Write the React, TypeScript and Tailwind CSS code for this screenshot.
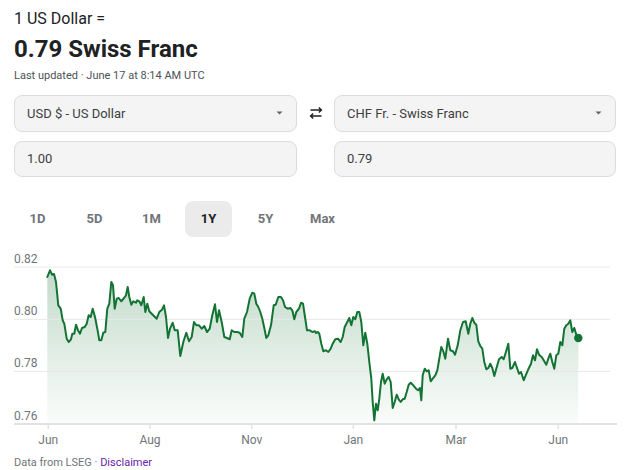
const LINE =
  "47.3,277 50,270.3 52,274.7 54,274 56,282 58.3,305.3 60.7,308.7 62.7,320.3 64.3,323.7 66.7,338.7 68.7,342 71,339.3 72.3,333.7 74.3,333.7 76,324.7 78,330.3 80,333.7 82,328 84.7,327 86.7,323.7 88.7,315.3 90.7,317 92.7,308.7 95,317 97.3,328.7 99.3,340.3 101.3,340.3 103.3,332.7 105.3,332 107.3,308.7 109.3,303.7 111.3,282 113,285.3 114.7,308.7 116.7,298.7 118.7,298 121.3,301.3 124,298 126,295.3 127.7,287 129.3,297 131.3,304.7 133.3,301.3 136,302.7 137.3,300.3 139.3,301.3 141.3,305.3 143.7,297 145.3,312 147.3,303.7 149.3,311.3 151.7,313.7 154,316 156.7,318.7 159.3,312 162,309.7 164,305.3 166,317 168,338 170,328.7 172.7,322.7 174.7,330.3 177.7,330.3 180.3,356 183.3,342 186.3,332.7 189,341.3 191.7,337 194,322 196.3,325.3 199,325.3 201.7,328.7 204.3,326 207,332 209.7,328.7 212.3,315.3 215,304.3 217,322 219,310.3 221.7,322 224.3,337 227,338 229.7,339.3 231.7,330.3 234.3,332 237,332 239.7,332.7 242.3,337 244.3,318.7 247,312 249.7,298.7 252.3,292.7 254.3,293.7 256.3,303.7 258.3,307 260.3,312 262.3,318.7 264.3,328 266.3,338 268.3,335.3 271,325.3 273.7,305.3 275.7,304.7 278.3,297 281,297 283,300.3 285,307 287.7,308.7 290.3,308 292.3,310.3 294.3,319.3 296.3,312 299,308.7 301,302.7 303,303.7 305,317 307,330.3 309.7,330.3 312.3,332 315,331.3 316,333 318,332 319.3,333.7 321.3,343.7 323.3,351.3 326,350.3 328.3,352 330.7,348.7 332.7,343.7 335.3,339.3 338,338.7 340.7,342 342.7,337 344.7,327 347.3,322 349.3,318 351.3,325.3 353.3,317 355.3,319.3 357.3,312 359.3,312 361.3,322 363.3,345.3 365.3,332.7 367.3,343.7 369.3,362 371.3,378.7 372.7,402 374.3,420.3 376,403.7 377.7,410.3 379.3,398.7 381,382 382.7,373.7 384.7,383.7 386.7,379.3 388.7,377 390.7,382 392.7,408 394.7,402 396.7,394.7 398.7,399.3 400.7,402 402.7,399.3 404.7,398.7 406.7,392 408.7,384.7 410.7,382.7 413.3,385.3 416,388.7 418,390.3 420,388 421.3,400.3 422.7,375.3 424.7,368.7 426.7,371.3 428.7,370.3 430.7,381.3 432.7,378.7 435.3,375.3 437.3,370.3 439.3,358.7 441.3,347 443.3,351.3 445.3,358.7 448,338.7 450.3,350.3 453,351.3 455,354.7 457.7,345.3 460.3,330.3 463,322 465.7,321.3 468.3,333.7 470.3,323.7 472.3,318 474.3,322.7 476.3,324.7 478.3,341.3 480.3,346 482.3,348.7 484.3,362 486.3,369.3 488.3,368 490.3,363.7 492.3,368 494.3,376 496.3,368.7 499,359.3 501.7,357 503.7,359.3 505.7,352.7 508.3,343.7 510.3,368.7 512.3,368 515,362 517,368 519,373.7 521,372 523.7,380.3 525.7,375.3 528.3,369.3 531,363.7 533,355.3 535,360.3 537,349.3 539,354.7 541.7,357 544.3,361.3 546.3,364.7 548.3,358.7 550.3,353.7 552.3,362 554.3,368.7 556.3,355.3 558.3,353.7 560.3,342 562.3,345.3 564.3,328.7 566.3,325.3 568.3,323.7 570.3,320.3 572.3,332 574.3,328 576.3,334.7 578.3,338";

const Y_TICKS = [
  { label: "0.82", y: 267 },
  { label: "0.80", y: 319.3 },
  { label: "0.78", y: 371.3 },
];

const X_TICKS = [
  { label: "Jun", x: 48.3 },
  { label: "Aug", x: 150 },
  { label: "Nov", x: 251.7 },
  { label: "Jan", x: 353.3 },
  { label: "Mar", x: 456 },
  { label: "Jun", x: 558.3 },
];

const RANGES = ["1D", "5D", "1M", "1Y", "5Y", "Max"];

function Caret() {
  return (
    <svg width="7" height="4" viewBox="0 0 7 4" className="shrink-0">
      <path d="M0.5 0.5 H6.5 L3.5 3.5 Z" fill="#5f6368" />
    </svg>
  );
}

function SwapIcon() {
  return (
    <svg width="16" height="16" viewBox="0 0 16 16" fill="none" stroke="#202124" strokeWidth="1.4">
      <path d="M2.5 5 H13.5 M10.8 2.4 L13.5 5 L10.8 7.6" />
      <path d="M13.5 11 H2.5 M5.2 8.4 L2.5 11 L5.2 13.6" />
    </svg>
  );
}

function Chart() {
  // drawn in page coordinates: the svg sits at x=14, y=237
  return (
    <svg width="604" height="219" viewBox="14 237 604 219" className="block">
      <defs>
        <linearGradient id="fx-fill" x1="0" y1="268" x2="0" y2="424" gradientUnits="userSpaceOnUse">
          <stop offset="0" stopColor="#137333" stopOpacity="0.26" />
          <stop offset="1" stopColor="#137333" stopOpacity="0.02" />
        </linearGradient>
      </defs>

      <path d={`M47.3,424 L${LINE.split(" ").join(" L")} L578.3,424 Z`} fill="url(#fx-fill)" />

      {Y_TICKS.map((t) => (
        <g key={t.label}>
          <line x1="14" x2="610" y1={t.y} y2={t.y} stroke="#e8e8e8" strokeWidth="1" />
          <text x="14" y={t.y - 4.5} fontSize="12" fill="#70757a" fontFamily="Roboto, Arial, sans-serif">
            {t.label}
          </text>
        </g>
      ))}
      <text x="14" y="419.5" fontSize="12" fill="#70757a" fontFamily="Roboto, Arial, sans-serif">
        0.76
      </text>

      <line x1="14" x2="617" y1="424" y2="424" stroke="#e2e2e2" strokeWidth="2" />
      {X_TICKS.map((t, i) => (
        <g key={i}>
          <line x1={t.x} x2={t.x} y1="424" y2="429" stroke="#e2e2e2" strokeWidth="1.5" />
          <text x={t.x} y="443.5" fontSize="12" fill="#70757a" textAnchor="middle" fontFamily="Roboto, Arial, sans-serif">
            {t.label}
          </text>
        </g>
      ))}

      <polyline points={LINE} fill="none" stroke="#137333" strokeWidth="2" strokeLinejoin="round" strokeLinecap="round" />
      <circle cx="578.3" cy="338" r="4.2" fill="#137333" />
    </svg>
  );
}

export default function App() {
  return (
    <div className="h-[470px] w-[632px] overflow-hidden bg-white px-[14px] font-['Roboto','Liberation_Sans',sans-serif] text-[#202124]">
      <div className="pt-[8.5px] text-[16px] leading-[20px]">1 US Dollar =</div>
      <div className="mt-[6.8px] text-[24px] font-bold leading-[28px]">0.79 Swiss Franc</div>
      <div className="mt-[5.5px] text-[11px] leading-[14px] text-[#4d5156]">Last updated · June 17 at 8:14 AM UTC</div>

      <div className="mt-[12px] grid grid-cols-[283px_37px_282px] gap-y-[9px] text-[13px] text-[#3c4043]">
        <div className="flex h-[37px] items-center justify-between rounded-lg border border-[#dadce0] bg-[#f4f4f4] pl-[12px] pr-[13px]">
          <span>USD $ - US Dollar</span>
          <Caret />
        </div>
        <div className="flex items-center justify-center">
          <SwapIcon />
        </div>
        <div className="flex h-[37px] items-center justify-between rounded-lg border border-[#dadce0] bg-[#f4f4f4] pl-[12px] pr-[13px]">
          <span>CHF Fr. - Swiss Franc</span>
          <Caret />
        </div>
        <div className="flex h-[36px] items-center rounded-lg border border-[#dadce0] bg-[#f4f4f4] pl-[12px]">1.00</div>
        <div />
        <div className="flex h-[36px] items-center rounded-lg border border-[#dadce0] bg-[#f4f4f4] pl-[12px]">0.79</div>
      </div>

      <div className="mt-[24px] flex gap-[10px]">
        {RANGES.map((r) => (
          <div
            key={r}
            className={`flex h-[36px] w-[47px] items-center justify-center rounded-lg text-[13px] font-bold ${
              r === "1Y" ? "bg-[#ebebeb] text-[#202124]" : "text-[#70757a]"
            }`}
          >
            {r}
          </div>
        ))}
      </div>

      <Chart />

      <div className="text-[11px] leading-[14px] text-[#70757a]">
        Data from LSEG · <span className="text-[#681da8]">Disclaimer</span>
      </div>
    </div>
  );
}
